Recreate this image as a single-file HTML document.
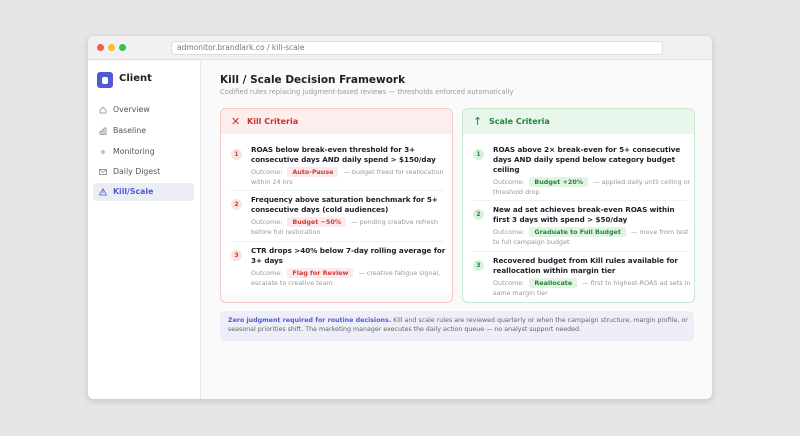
<!DOCTYPE html>
<html><head><style>
*{box-sizing:border-box;margin:0;padding:0}
body{width:800px;height:436px;background:#e6e6e8;font-family:"DejaVu Sans","Liberation Sans",sans-serif;position:relative;overflow:hidden}
.win{position:absolute;left:88px;top:36px;width:624px;height:363px;background:#fafafa;border-radius:6px;overflow:hidden;box-shadow:0 2px 8px rgba(0,0,0,.15)}
.tb{height:24px;background:#f1f1f3;border-bottom:1px solid #e2e2e4;position:relative}
.dot{position:absolute;top:8px;width:7px;height:7px;border-radius:50%}
.url{position:absolute;left:83px;top:5px;width:492px;height:14px;background:#fff;border:1px solid #dcdcdf;border-radius:4px;font-size:7.5px;color:#777;padding-left:5px;line-height:12px}
.side{position:absolute;left:0;top:25px;width:113px;bottom:0;background:#fff;border-right:1px solid #e8e8ea}
.logo{position:absolute;left:9px;top:11px;width:16px;height:16px;background:#4f5bd5;border-radius:3px}
.logo:after{content:"";position:absolute;left:5px;top:4.5px;width:6px;height:7px;background:#fff;border-radius:2px}
.brand{position:absolute;left:31px;top:12px;font-size:10px;font-weight:bold;color:#1e1e28}
.nav{position:absolute;left:5px;width:101px;height:18px;font-size:7.8px;color:#555;line-height:18px;padding-left:20px;border-radius:4px}
.nav svg{position:absolute;left:6px;top:5px}
.nav.act{background:#ececf5;color:#4f5bd5;font-weight:bold}
h1{font-size:10.5px;font-weight:bold;color:#1e1e28;position:absolute;left:132px;top:38px;white-space:nowrap}
.sub{position:absolute;left:132px;top:52px;font-size:6.8px;color:#999;white-space:nowrap}
.card{position:absolute;top:72px;width:233px;height:195px;background:#fff;border-radius:6px;overflow:hidden}
.hd{height:25px;font-size:8px;font-weight:bold;line-height:25px;padding-left:26px;position:relative}
.hd span{position:absolute;left:10px;font-size:11px;font-weight:normal}
.it{position:absolute;left:10px;width:214px;padding-left:20px;white-space:nowrap}
.it.b{border-bottom:1px solid #f0f0f2}
.n{position:absolute;left:0;top:4px;width:11px;height:11px;border-radius:50%;font-size:6px;font-weight:bold;text-align:center;line-height:11px}
.t{font-size:7.2px;font-weight:bold;color:#1e1e28;line-height:10px;letter-spacing:-.05px}
.o{font-size:6.4px;color:#999;line-height:9.5px;margin-top:2px}
.bd{display:inline-block;padding:0 5px;border-radius:2px;font-weight:bold;margin:0 3px;line-height:10px}
.k .n{background:#fde0e0;color:#d23a3a}.k .bd{background:#fdeaea;color:#d23a3a}
.s .n{background:#d8f0dc;color:#23843a}.s .bd{background:#e2f5e5;color:#23843a}
.note{position:absolute;left:132px;top:275px;width:474px;height:30px;background:#eeeef8;border-radius:5px;font-size:6.3px;color:#666;line-height:9px;padding:5px 8px;white-space:nowrap}
</style></head><body>
<div class="win">
<div class="tb"><div class="dot" style="left:9px;background:#f05b52"></div><div class="dot" style="left:20px;background:#f6bc2f"></div><div class="dot" style="left:31px;background:#2cc840"></div><div class="url">admonitor.brandlark.co / kill-scale</div></div>
<div class="side">
<div class="logo"></div><div class="brand">Client</div>
<div class="nav" style="top:40px"><svg width="8" height="8" viewBox="0 0 8 8" fill="none" stroke="#888" stroke-width=".8"><path d="M1 4L4 1.2 7 4V7H1Z"/></svg>Overview</div>
<div class="nav" style="top:61px"><svg width="8" height="8" viewBox="0 0 8 8" fill="none" stroke="#888" stroke-width=".8"><path d="M1 7.5V4.5H3V7.5M3 7.5V3H5V7.5M5 7.5V1H7V7.5H1"/></svg>Baseline</div>
<div class="nav" style="top:82px"><svg width="8" height="8" viewBox="0 0 8 8" fill="none" stroke="#888" stroke-width=".8"><circle cx="4" cy="4" r="1.2"/></svg>Monitoring</div>
<div class="nav" style="top:102px"><svg width="8" height="8" viewBox="0 0 8 8" fill="none" stroke="#888" stroke-width=".8"><rect x=".5" y="1.5" width="7" height="5"/><path d="M.5 1.5L4 4.5 7.5 1.5"/></svg>Daily Digest</div>
<div class="nav act" style="top:122px"><svg width="8" height="8" viewBox="0 0 8 8" fill="none" stroke="#4f5bd5" stroke-width=".8"><path d="M4 .8L7.5 7H.5Z M4 3V5"/></svg>Kill/Scale</div>
</div>
<h1>Kill / Scale Decision Framework</h1>
<div class="sub">Codified rules replacing judgment-based reviews — thresholds enforced automatically</div>
<div class="card k" style="left:132px;border:1px solid #f6c9c9">
<div class="hd" style="background:#fdeded;color:#c8332f"><span>✕</span>Kill Criteria</div>
<div class="it b" style="top:36px;height:46px"><div class="n">1</div><div class="t">ROAS below break-even threshold for 3+<br>consecutive days AND daily spend &gt; $150/day</div><div class="o">Outcome: <span class="bd">Auto-Pause</span> — budget freed for reallocation<br>within 24 hrs</div></div>
<div class="it b" style="top:86px;height:47px"><div class="n">2</div><div class="t">Frequency above saturation benchmark for 5+<br>consecutive days (cold audiences)</div><div class="o">Outcome: <span class="bd">Budget −50%</span> — pending creative refresh<br>before full restoration</div></div>
<div class="it" style="top:137px"><div class="n">3</div><div class="t">CTR drops &gt;40% below 7-day rolling average for<br>3+ days</div><div class="o">Outcome: <span class="bd">Flag for Review</span> — creative fatigue signal,<br>escalate to creative team</div></div>
<div style="position:absolute;left:0;right:0;bottom:0;height:9px;background:#fafafa"></div>
</div>
<div class="card s" style="left:374px;border:1px solid #c9e8cf">
<div class="hd" style="background:#e9f6ec;color:#23843a"><span>↑</span>Scale Criteria</div>
<div class="it b" style="top:36px;height:56px"><div class="n">1</div><div class="t">ROAS above 2× break-even for 5+ consecutive<br>days AND daily spend below category budget<br>ceiling</div><div class="o">Outcome: <span class="bd">Budget +20%</span> — applied daily until ceiling or<br>threshold drop</div></div>
<div class="it b" style="top:96px;height:47px"><div class="n">2</div><div class="t">New ad set achieves break-even ROAS within<br>first 3 days with spend &gt; $50/day</div><div class="o">Outcome: <span class="bd">Graduate to Full Budget</span> — move from test<br>to full campaign budget</div></div>
<div class="it" style="top:147px"><div class="n">3</div><div class="t">Recovered budget from Kill rules available for<br>reallocation within margin tier</div><div class="o">Outcome: <span class="bd">Reallocate</span> — first to highest-ROAS ad sets in<br>same margin tier</div></div>
</div>
<div class="note"><b style="color:#4f5bd5">Zero judgment required for routine decisions.</b> Kill and scale rules are reviewed quarterly or when the campaign structure, margin profile, or<br>seasonal priorities shift. The marketing manager executes the daily action queue — no analyst support needed.</div>
</div>
</body></html>
